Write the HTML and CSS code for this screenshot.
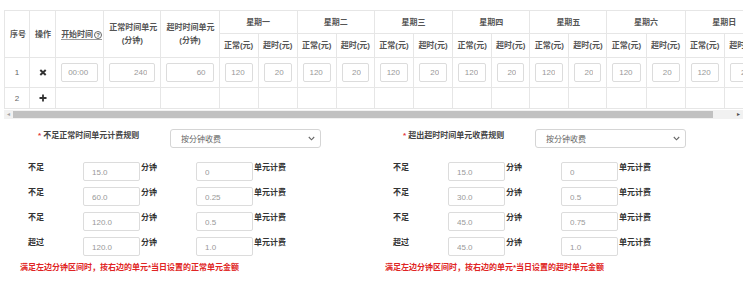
FILE: index.html
```html
<!DOCTYPE html>
<html lang="zh-CN">
<head>
    <meta charset="UTF-8">
    <meta name="viewport" content="width=device-width, initial-scale=1.0">
    <title>计费规则</title>
    <link rel="stylesheet" href="styles.css">
</head>
<body>

    <div class="grid-wrap">
        <div class="grid-scroll">
            <table class="grid">
                <colgroup>
                    <col style="width:25px"><col style="width:26px"><col style="width:48px"><col style="width:57px"><col style="width:58px">
                    <col style="width:39px"><col style="width:39px">
                    <col style="width:39px"><col style="width:38px">
                    <col style="width:39px"><col style="width:39px">
                    <col style="width:39px"><col style="width:38px">
                    <col style="width:39px"><col style="width:38px">
                    <col style="width:39px"><col style="width:39px">
                    <col style="width:39px"><col style="width:39px">
                </colgroup>
                <thead>
                    <tr class="head-top">
                        <th rowspan="2">序号</th>
                        <th rowspan="2">操作</th>
                        <th rowspan="2"><span class="help-text">开始时间<span class="help">?</span></span></th>
                        <th rowspan="2">正常时间单元<br>(分钟)</th>
                        <th rowspan="2">超时时间单元<br>(分钟)</th>
                        <th colspan="2">星期一</th>
                        <th colspan="2">星期二</th>
                        <th colspan="2">星期三</th>
                        <th colspan="2">星期四</th>
                        <th colspan="2">星期五</th>
                        <th colspan="2">星期六</th>
                        <th colspan="2">星期日</th>
                    </tr>
                    <tr class="head-sub">
                        <th>正常(元)</th><th>超时(元)</th>
                        <th>正常(元)</th><th>超时(元)</th>
                        <th>正常(元)</th><th>超时(元)</th>
                        <th>正常(元)</th><th>超时(元)</th>
                        <th>正常(元)</th><th>超时(元)</th>
                        <th>正常(元)</th><th>超时(元)</th>
                        <th>正常(元)</th><th>超时(元)</th>
                    </tr>
                </thead>
                <tbody>
                    <tr class="row-data">
                        <td>1</td>
                        <td>
                            <svg class="op-icon" width="8" height="7" viewBox="0 0 8 7">
                                <path d="M1.3 1 L6.7 6 M6.7 1 L1.3 6" stroke="#333" stroke-width="2"/>
                            </svg>
                        </td>
                        <td><input class="cell-input left" value="00:00" readonly></td>
                        <td><input class="cell-input" value="240" readonly></td>
                        <td><input class="cell-input" value="60" readonly></td>
                        <td><input class="cell-input" value="120" readonly></td><td><input class="cell-input" value="20" readonly></td>
                        <td><input class="cell-input" value="120" readonly></td><td><input class="cell-input" value="20" readonly></td>
                        <td><input class="cell-input" value="120" readonly></td><td><input class="cell-input" value="20" readonly></td>
                        <td><input class="cell-input" value="120" readonly></td><td><input class="cell-input" value="20" readonly></td>
                        <td><input class="cell-input" value="120" readonly></td><td><input class="cell-input" value="20" readonly></td>
                        <td><input class="cell-input" value="120" readonly></td><td><input class="cell-input" value="20" readonly></td>
                        <td><input class="cell-input" value="120" readonly></td><td><input class="cell-input" value="20" readonly></td>
                    </tr>
                    <tr class="row-add">
                        <td>2</td>
                        <td>
                            <svg class="op-icon" width="8" height="8" viewBox="0 0 8 8">
                                <path d="M4 0.5 V7.5 M0.5 4 H7.5" stroke="#333" stroke-width="1.8"/>
                            </svg>
                        </td>
                        <td></td><td></td><td></td>
                        <td></td><td></td><td></td><td></td><td></td><td></td><td></td>
                        <td></td><td></td><td></td><td></td><td></td><td></td><td></td>
                    </tr>
                </tbody>
            </table>
        </div>
        <div class="hscroll">
            <span class="hscroll-btn off">&#9666;</span>
            <div class="hscroll-track"><div class="hscroll-thumb"></div></div>
            <span class="hscroll-btn">&#9656;</span>
        </div>
    </div>

    <div class="rules">
        <div class="rule-col">
            <div class="rule-head">
                <label class="rule-title"><span class="req">*</span> 不足正常时间单元计费规则</label>
                <div class="select">
                    <span>按分钟收费</span>
                    <svg width="7" height="5" viewBox="0 0 7 5"><path d="M0.8 1 L3.5 3.8 L6.2 1" fill="none" stroke="#666" stroke-width="1.1"/></svg>
                </div>
            </div>
            <div class="rule-row">
                <span class="rule-label">不足</span>
                <input class="rule-input" value="15.0" readonly><span class="rule-unit">分钟</span>
                <input class="rule-input" value="0" readonly><span class="rule-unit">单元计费</span>
            </div>
            <div class="rule-row">
                <span class="rule-label">不足</span>
                <input class="rule-input" value="60.0" readonly><span class="rule-unit">分钟</span>
                <input class="rule-input" value="0.25" readonly><span class="rule-unit">单元计费</span>
            </div>
            <div class="rule-row">
                <span class="rule-label">不足</span>
                <input class="rule-input" value="120.0" readonly><span class="rule-unit">分钟</span>
                <input class="rule-input" value="0.5" readonly><span class="rule-unit">单元计费</span>
            </div>
            <div class="rule-row">
                <span class="rule-label">超过</span>
                <input class="rule-input" value="120.0" readonly><span class="rule-unit">分钟</span>
                <input class="rule-input" value="1.0" readonly><span class="rule-unit">单元计费</span>
            </div>
            <p class="rule-note">满足左边分钟区间时，按右边的单元*当日设置的正常单元金额</p>
        </div>

        <div class="rule-col">
            <div class="rule-head">
                <label class="rule-title"><span class="req">*</span> 超出超时时间单元收费规则</label>
                <div class="select">
                    <span>按分钟收费</span>
                    <svg width="7" height="5" viewBox="0 0 7 5"><path d="M0.8 1 L3.5 3.8 L6.2 1" fill="none" stroke="#666" stroke-width="1.1"/></svg>
                </div>
            </div>
            <div class="rule-row">
                <span class="rule-label">不足</span>
                <input class="rule-input" value="15.0" readonly><span class="rule-unit">分钟</span>
                <input class="rule-input" value="0" readonly><span class="rule-unit">单元计费</span>
            </div>
            <div class="rule-row">
                <span class="rule-label">不足</span>
                <input class="rule-input" value="30.0" readonly><span class="rule-unit">分钟</span>
                <input class="rule-input" value="0.5" readonly><span class="rule-unit">单元计费</span>
            </div>
            <div class="rule-row">
                <span class="rule-label">不足</span>
                <input class="rule-input" value="45.0" readonly><span class="rule-unit">分钟</span>
                <input class="rule-input" value="0.75" readonly><span class="rule-unit">单元计费</span>
            </div>
            <div class="rule-row">
                <span class="rule-label">超过</span>
                <input class="rule-input" value="45.0" readonly><span class="rule-unit">分钟</span>
                <input class="rule-input" value="1.0" readonly><span class="rule-unit">单元计费</span>
            </div>
            <p class="rule-note">满足左边分钟区间时，按右边的单元*当日设置的超时单元金额</p>
        </div>
    </div>

</body>
</html>
```

FILE: styles.css
```css
* {
    box-sizing: border-box;
}

body {
    font-family: "Liberation Sans", "Noto Sans CJK SC", sans-serif;
    font-size: 8px;
    color: #333;
    background: #fff;
    margin: 0;
    padding: 10px 0 0 4px;
}

input {
    font-family: inherit;
    font-size: 8px;
    color: #999;
    margin: 0;
    outline: none;
}

/* table */
.grid-wrap {
    width: 739px;
}

.grid-scroll {
    overflow: hidden;
}

.grid {
    table-layout: fixed;
    width: 760px;
    border-collapse: collapse;
}

.grid th,
.grid td {
    border: 1px solid #e6e6e6;
    padding: 0 5px;
    text-align: center;
    vertical-align: middle;
    white-space: nowrap;
}

.grid th {
    color: #555;
    font-weight: bold;
    line-height: 13px;
}

.head-top th {
    height: 23px;
}

.head-sub th {
    height: 24px;
    padding: 0;
}

.row-data td {
    height: 30px;
    color: #666;
}

.row-add td {
    height: 21px;
    color: #666;
}

.op-icon {
    display: block;
    margin: 0 auto;
}

.help-text {
    border-bottom: 1px solid #999;
}

.help {
    display: inline-block;
    width: 8px;
    height: 8px;
    line-height: 6px;
    border: 1px solid #666;
    border-radius: 50%;
    color: #555;
    font-size: 6px;
    text-align: center;
    margin-left: 1px;
}

.cell-input {
    display: block;
    width: 100%;
    height: 19px;
    border: 1px solid #dcdcdc;
    border-radius: 2px;
    padding: 0 7px 0 2px;
    text-align: right;
}

.cell-input.left {
    text-align: left;
    padding: 0 2px 0 6px;
}

/* fake horizontal scrollbar */
.hscroll {
    display: flex;
    height: 9px;
    background: #f1f1f1;
    margin-top: 1px;
}

.hscroll-btn {
    width: 9px;
    font-size: 6px;
    line-height: 9px;
    text-align: center;
    color: #505050;
}

.hscroll-btn.off {
    color: #a3a3a3;
}

.hscroll-track {
    flex: 1;
    padding: 1px 0;
}

.hscroll-thumb {
    width: 700px;
    height: 7px;
    background: #c1c1c1;
}

/* rules */
.rules {
    display: flex;
    margin: 10px 0 0 16px;
}

.rule-col {
    width: 370px;
}

.rule-head {
    display: flex;
    align-items: flex-start;
    margin-bottom: 14px;
}

.rule-title {
    width: 150px;
    padding: 2px 0 0 18px;
    font-weight: bold;
    color: #444;
    line-height: 10px;
}

.req {
    color: #e4393c;
}

.select {
    width: 151px;
    height: 19px;
    border: 1px solid #d5d5d5;
    border-radius: 3px;
    padding: 0 5px 0 10px;
    display: flex;
    align-items: center;
    justify-content: space-between;
    color: #666;
}

.rule-row {
    display: flex;
    align-items: flex-start;
    margin-bottom: 6px;
}

.rule-label {
    width: 63px;
    padding: 1px 0 0 8px;
    line-height: 10px;
    font-weight: bold;
}

.rule-input {
    width: 57px;
    height: 19px;
    border: 1px solid #dcdcdc;
    border-radius: 2px;
    padding: 2px 0 0 8px;
}

.rule-unit {
    width: 56px;
    padding: 1px 0 0 1px;
    line-height: 10px;
    font-weight: bold;
}

.rule-note {
    margin: 0;
    padding-top: 1px;
    line-height: 10px;
    color: #e02424;
    font-weight: bold;
}
```
